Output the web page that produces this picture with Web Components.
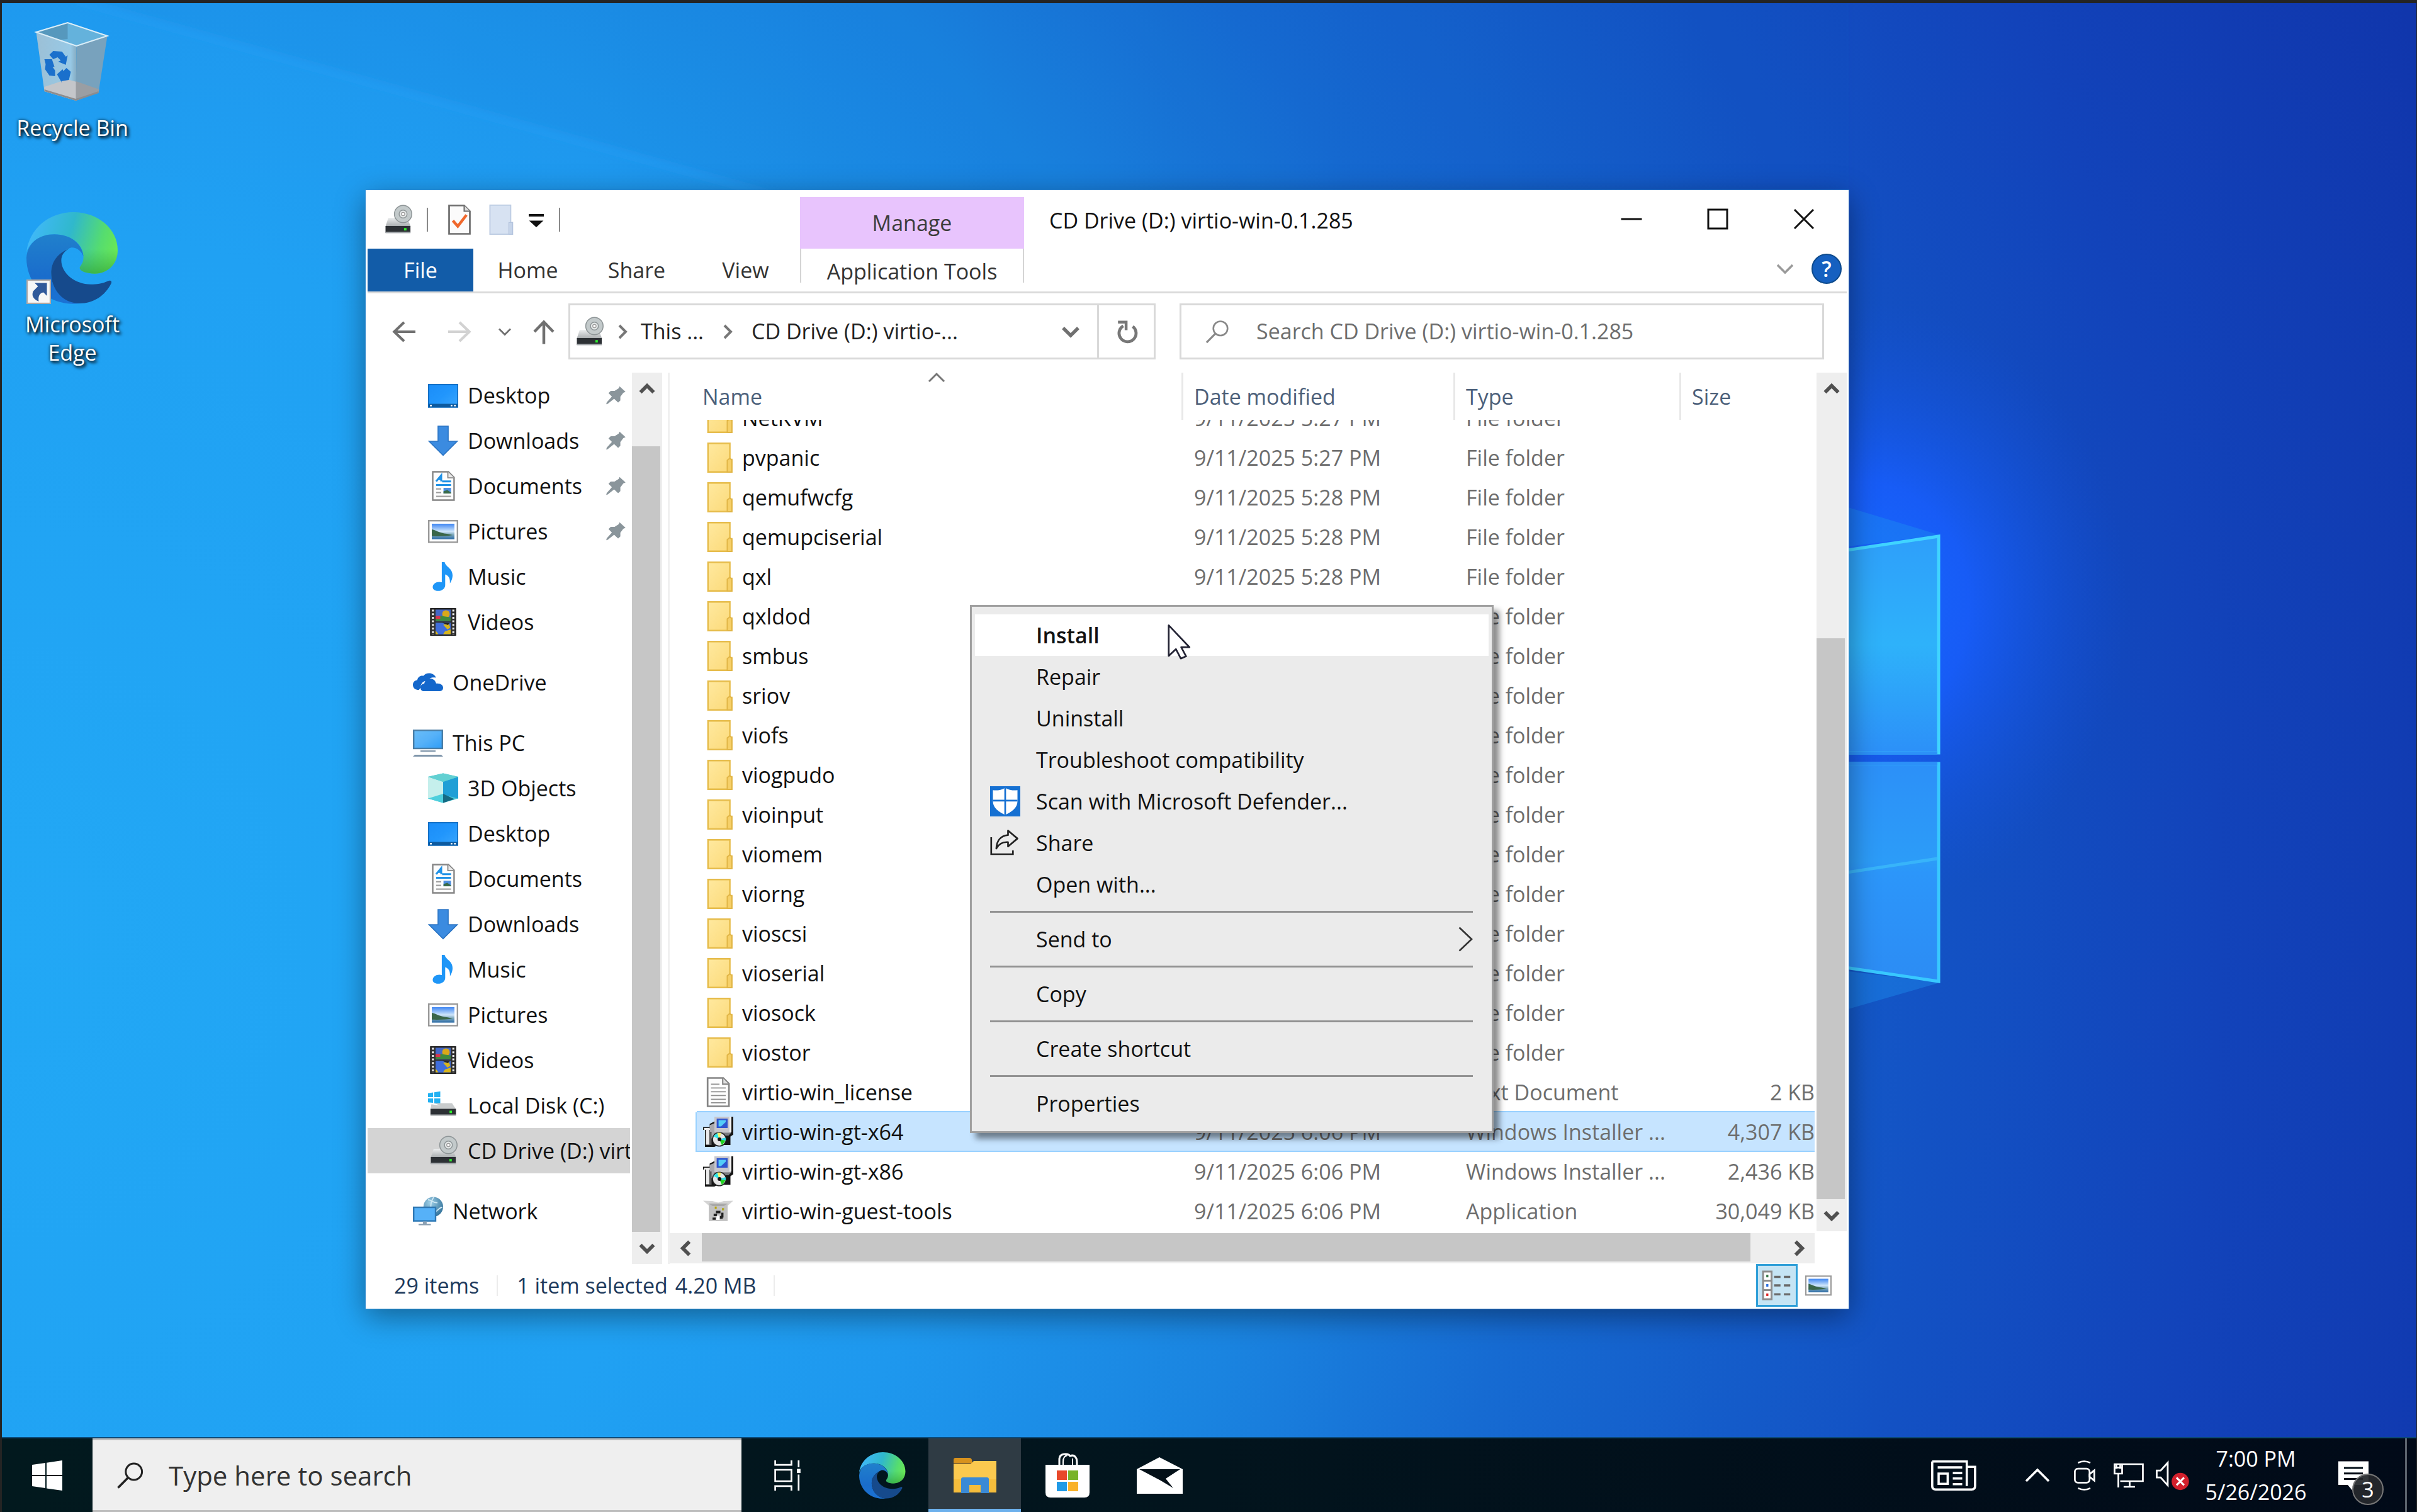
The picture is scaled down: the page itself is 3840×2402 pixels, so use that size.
<!DOCTYPE html>
<html lang="en">
<head>
<meta charset="utf-8">
<title>Desktop</title>
<style>
html,body{margin:0;height:100%}
body{font-family:"Open Sans","Noto Sans",sans-serif;font-size:34px;line-height:45px;color:#111;background:#242424;overflow:hidden}
</style>
</head>
<body>
<desktop-shell></desktop-shell>
<script>
const ICONS = {
drive:['0 0 16 16',`<defs><linearGradient id="a" x1="0" y1="0" x2="0" y2="1"><stop offset="0" stop-color="#eceeef"/><stop offset="1" stop-color="#a9adaf"/></linearGradient></defs><path d="M3 7h10l1.800 4.500H1.500z" fill="url(#a)"/><ellipse cx="10.800" cy="5" rx="4.600" ry="4.600" fill="#c3cacb" stroke="#8e9597" stroke-width=".5"/><circle cx="10.800" cy="5" r="2.100" fill="#e4e8e8" stroke="#8f9698" stroke-width=".5"/><circle cx="10.800" cy="5" r=".9" fill="#fff" stroke="#999" stroke-width=".4"/><path d="M1.500 11.300h13.200v3.600H1.500z" fill="#2c3034"/><path d="M1.500 14.400h13.200v.8H1.500z" fill="#a8acb0"/><rect x="11.300" y="12.400" width="1.300" height="1.300" fill="#2ef02e"/>`],
disk:['0 0 16 16',`<g fill="#22b1f2"><path d="M0 1.600l2.700-.4v2.500H0zM3.300 1.100L6.500.6v3.100H3.300zM0 4.300h2.700v2.400L0 6.400zM3.300 4.300h3.200v3.100l-3.200-.5z"/></g><path d="M3.200 6.800h9.500l2.100 3.200H1.300l.5-2.600 4.700.7z" fill="#c9cccd"/><path d="M1.300 9.800h13.500v3.400H1.300z" fill="#2c3034"/><path d="M1.300 12.800h13.500v.8H1.300z" fill="#b0b4b6"/><rect x="11.400" y="10.800" width="1.300" height="1.300" fill="#2ef02e"/>`],
check:['0 0 16 16',`<path d="M2.500.5h8l3 3v12h-11z" fill="#fbfbfb" stroke="#6d6d6d" stroke-width=".9"/><path d="M10.500.5v3h3" fill="#ddd" stroke="#6d6d6d" stroke-width=".7"/><path d="M4.500 8.500l2.600 3 4.600-6" fill="none" stroke="#f0682c" stroke-width="1.500"/>`],
newfolder:['0 0 16 16',`<path d="M1.800.3h11v9.200h1v6.200h-12z" fill="#d7e2f2" stroke="#bccbe2" stroke-width=".6"/><path d="M11.800 9.500h2v6.200h-2z" fill="#c6d4e9" stroke="#b4c4de" stroke-width=".4"/>`],
qat:['0 0 16 16',`<path d="M4 5h8v1.300H4zM4.200 8.500h7.600L8 12z" fill="#111"/>`],
min:['0 0 16 16',`<path d="M2.500 8h11" stroke="#111" stroke-width="1"/>`],
max:['0 0 16 16',`<rect x="3" y="3" width="10" height="10" fill="none" stroke="#111" stroke-width="1"/>`],
close:['0 0 16 16',`<path d="M3 3l10 10M13 3L3 13" stroke="#111" stroke-width="1"/>`],
down:['0 0 16 16',`<path d="M4 6l4 4 4-4" fill="none" stroke="currentColor" stroke-width="var(--sw,1.200)" style="stroke-width:var(--sw,1.2)"/>`],
up:['0 0 16 16',`<path d="M4 10l4-4 4 4" fill="none" stroke="currentColor" style="stroke-width:var(--sw,1.2)"/>`],
left:['0 0 16 16',`<path d="M10 4L6 8l4 4" fill="none" stroke="currentColor" style="stroke-width:var(--sw,1.2)"/>`],
right:['0 0 16 16',`<path d="M6 4l4 4-4 4" fill="none" stroke="currentColor" style="stroke-width:var(--sw,1.2)"/>`],
submenu:['0 0 16 16',`<path d="M4.500 1.800l6.500 6.200-6.500 6.200" fill="none" stroke="#333" stroke-width=".9"/>`],
back:['0 0 16 16',`<path d="M14 8H2.800M8 3L2.800 8l5.200 5" fill="none" stroke="currentColor" stroke-width="1.400"/>`],
fwd:['0 0 16 16',`<path d="M2 8h11.200M8 3l5.200 5L8 13" fill="none" stroke="currentColor" stroke-width="1.400"/>`],
upa:['0 0 16 16',`<path d="M8 14.500V3M3 8l5-5.200L13 8" fill="none" stroke="currentColor" stroke-width="1.500"/>`],
refresh:['0 0 16 16',`<path d="M11.200 5.200a4.500 4.500 0 1 1-5 -.3" fill="none" stroke="#777" stroke-width="1.600"/><path d="M3.400 2.900h4.300v4.300" fill="none" stroke="#777" stroke-width="1.500"/>`],
search:['0 0 16 16',`<circle cx="9.900" cy="6" r="4.300" fill="none" stroke="currentColor" stroke-width="1"/><path d="M6.800 9.200L1.500 14.500" stroke="currentColor" stroke-width="1.200"/>`],
desktop:['0 0 16 16',`<defs><linearGradient id="a" x1="0" y1="0" x2="1" y2="1"><stop offset="0" stop-color="#1b8df8"/><stop offset=".5" stop-color="#2196fc"/><stop offset="1" stop-color="#3aa6fd"/></linearGradient></defs><rect x=".3" y="2.300" width="15.400" height="12" fill="url(#a)" stroke="#1570c4" stroke-width=".6"/><path d="M.3 12.500h15.400v1.800H.3z" fill="#0d5a9f"/><path d="M1 13h1v.8H1zM12 13h.9v.8h-.9zM13.800 13h.9v.8h-.9z" fill="#fff"/>`],
download:['0 0 16 16',`<path d="M5.300.3h5.400v8h4.800L8 15.800.5 8.300h4.800z" fill="#3b8be0" stroke="#2b74c4" stroke-width=".5"/>`],
document:['0 0 16 16',`<path d="M2.500.5h8.300l3 3v12H2.500z" fill="#fdfdfd" stroke="#858585" stroke-width=".8"/><path d="M10.500.5v3.200h3.300" fill="#e8e8e8" stroke="#858585" stroke-width=".6"/><path d="M4.300 5.600L7 2.400V5.600M5 4.400h2.500M7.500 5.600h4.700M4.300 7.500h7.900" stroke="#2192e6" stroke-width="1" fill="none"/><path d="M4.300 9.600h2.700M4.300 11.500h2.700M4.300 13.500h7.900" stroke="#9a9a9a" stroke-width=".7"/><rect x="8.200" y="9" width="4" height="3" fill="#4f8fe0"/><path d="M8.200 10.800l2-.6 2 1.300v.5h-4z" fill="#386a4a"/>`],
picture:['0 0 16 16',`<defs><linearGradient id="a" x1="0" y1="0" x2="0" y2="1"><stop offset="0" stop-color="#3f86f2"/><stop offset=".5" stop-color="#cfe6fb"/><stop offset=".7" stop-color="#7fa9bd"/><stop offset="1" stop-color="#2c6ba6"/></linearGradient></defs><rect x=".4" y="2.400" width="15.200" height="11.400" fill="#fff" stroke="#9a9a9a" stroke-width=".8"/><rect x="2" y="4" width="12" height="8.200" fill="url(#a)"/><path d="M2 7c2 .3 4 2 8 2.300L13 10c-3 .6-7 .7-11 .6z" fill="#3a6649"/>`],
music:['0 0 16 16',`<path d="M7.300.3h1.500c.5 2.500 4.200 3.200 4.200 7 0 2-1 3.700-1.400 4.300.2-2.800-.6-4-2.500-4.800v5.700c0 1.900-1.700 3.100-3.800 3.100-1.700 0-2.800-.8-2.800-2.100 0-1.600 1.700-2.700 3.400-2.700.6 0 1 .1 1.400.2z" fill="#1f96f7"/>`],
video:['0 0 16 16',`<rect x="1.300" y=".9" width="13.400" height="14.200" fill="#303030" stroke="#111" stroke-width=".4"/><path d="M2.600 1.500v13.500M13.400 1.500v13.500" stroke="#eee" stroke-width="1" stroke-dasharray="1 .9"/><rect x="4" y="1.500" width="8" height="6.200" fill="#4468c8"/><rect x="4" y="8.400" width="8" height="6.200" fill="#3f6ddc"/><circle cx="9.500" cy="3.800" r="2" fill="#d9a819"/><path d="M4 5.300l3-.5 5 .8v1.900H4z" fill="#3e8a3c"/><path d="M4 4.800h2.500v1.600H4z" fill="#d8354e"/><path d="M8 9.500l3-.5.8 2-1.500 1zM9 13l3-1v2.500H8zM4 12.500l1.500 2H4z" fill="#d8b51d"/><path d="M7.500 8.400l4 .3-1 1z" fill="#222"/>`],
cloud:['0 0 16 16',`<path d="M3.200 12C1.300 12 0 11 0 9.300 0 7.800 1 6.900 2.300 6.800 2.700 5 4.100 4.300 5.500 4.600 6.400 3.500 7.700 3 9 3.200c1.500.2 2.700 1 3.200 2.300-2-.4-3.800.3-4.600 1.700-2.200 0-3.600 1.600-3.500 3.500z" fill="#1467cb"/><path d="M6 12.700c-1.300 0-2-.8-2-1.900 0-1.200.8-2 2-2.100.4-2 1.900-2.900 3.500-2.700 1.500.2 2.500 1.200 2.800 2.600 2.200-.3 3.700.8 3.700 2.200 0 1.200-.9 1.900-2.100 1.900z" fill="#1467cb"/>`],
pc:['0 0 16 16',`<defs><linearGradient id="a" x1="0" y1="0" x2="1" y2="1"><stop offset="0" stop-color="#69bdf8"/><stop offset=".5" stop-color="#56b1f8"/><stop offset="1" stop-color="#2f9df6"/></linearGradient></defs><rect x=".4" y="1.400" width="15.200" height="9.600" fill="url(#a)" stroke="#4a7ea6" stroke-width=".8"/><path d="M4 12h8v.9H4z" fill="#8ea2b4"/><path d="M1 14.300h14l1 1H0z" fill="#7e94aa"/>`],
cube:['0 0 16 16',`<path d="M8 .2L16 2v11.500L8 15.800 0 13.500V2z" fill="#47c8d6"/><path d="M0 2l8 2.700V13l-8 .5z" fill="#c5efec"/><path d="M8 4.700L16 2v11.500L8 11.500z" fill="#1f9fd6"/><path d="M8 .2L16 2 8 4.700 0 2z" fill="#62d0d2"/><path d="M0 13.500l8-2.500v4.800z" fill="#4ecfdd"/><path d="M8 11l6 2.800-6 2z" fill="#156a83"/>`],
network:['0 0 16 16',`<defs><radialGradient id="g" cx=".35" cy=".3" r=".8"><stop offset="0" stop-color="#9fd0e8"/><stop offset="1" stop-color="#2c6d96"/></radialGradient></defs><circle cx="10.800" cy="5.700" r="5.200" fill="url(#g)"/><path d="M8 2c2 0 3 2 5 1.500M11 9c2-1 3-3 4.500-3M11 .7c-2 3-2 6 0 9" stroke="#cfe8f4" stroke-width=".6" fill="none"/><rect x=".4" y="6" width="11.600" height="7.200" fill="#56b1f8" stroke="#2f78b4" stroke-width=".8"/><path d="M3 14.700h6.500v.8H3zM5.300 13.500h2v1.300h-2z" fill="#8ea2b4"/>`],
folder:['0 0 16 16',`<defs><linearGradient id="a" x1="0" y1="0" x2="1" y2="1"><stop offset="0" stop-color="#ffe99f"/><stop offset="1" stop-color="#fbd978"/></linearGradient></defs><path d="M2.600.4h11.600v8.600h1v6.600H2.600z" fill="url(#a)" stroke="#e6bc4b" stroke-width=".8"/><path d="M12.800 9.400l1.300-1 1.100.8v6.400h-2.400z" fill="#f6d069" stroke="#e0b445" stroke-width=".6"/>`],
text:['0 0 16 16',`<path d="M2.400.5h8.300l3 3v12H2.400z" fill="#fdfdfd" stroke="#858585" stroke-width=".9"/><path d="M10.400.5v3.300h3.300" fill="#e0e0e0" stroke="#858585" stroke-width=".7"/><path d="M4.200 3.800h4.500M4.200 5.800h7.800M4.200 7.800h7.800M4.200 9.800h7.800M4.200 11.800h7.800M4.200 13.600h7.800" stroke="#8f8f8f" stroke-width=".6"/>`],
msi:['0 0 16 16',`<path d="M14.700 0H16v9.500l-1.500 1V15H8L6 16H1l0-9H0V5.500h3.500V3.800L6 2.500z" fill="#161616"/><path d="M6 0h8.800v8.600H6z" fill="#c6c6cc"/><rect x="7.200" y="1" width="5.800" height="5" fill="#2f55cf"/><path d="M8.200 1.800h3.800v1L9.500 5.200H8.200z" fill="#53cdf8"/><path d="M14 0h1v8h-1z" fill="#f4f4f4"/><path d="M3.500 4.500L6 3.500v8H3.500z" fill="#a8a8ac"/><path d="M.5 6h3l.2 1H.5zM1.500 7h1.800v7.800H1.500z" fill="#ededed"/><path d="M3.300 8h1.200v7H3.300z" fill="#5a5a5a"/><path d="M6 8.600h8.800L13.500 10H6z" fill="#7a7a80"/><circle cx="8.600" cy="12" r="3.600" fill="#e6e6e6" stroke="#222" stroke-width=".5"/><path d="M8.600 12L5.400 10.300 7.500 8.700z" fill="#2ee6e6"/><path d="M8.600 12l1-3.400-2-.1z" fill="#f4f06a"/><path d="M8.600 12l3.400.6-2 2.600z" fill="#21d621"/><path d="M8.600 12l3.300-1 .1 1.600z" fill="#27d9e6"/><circle cx="8.700" cy="12" r="1" fill="#111"/>`],
exe:['0 0 16 16',`<path d="M0 2.500l5 .2 3 .8 3-.8 5-.2-2.800 2.500H3z" fill="#d4d4d4"/><path d="M3 4h10v9.300H3z" fill="#c2c2c2"/><path d="M3 4h10l-2 1.300H5z" fill="#a8a8a8"/><rect x="6.200" y="5.600" width="1" height="1.200" fill="#b8a400"/><rect x="10" y="6.400" width="1.100" height="1.200" fill="#b0a821"/><path d="M6.800 7.800h2.400v1.400H6.800zM5.600 9.300h1.800v1.400H5.600zM5 11.400h1.700v1.200H5zM9.600 8.800h1.200v2.600H9.600zM8.800 10.600h1.600v1.400H8.800z" fill="#222"/><path d="M7.300 10.400h1.500v2.300H6.900z" fill="#fff"/>`],
pin:['1 1.5 14 14',`<path d="M10.500 2.200l4 3.800-1.500.6-2 2.600v2.600l-1.500 1.400-2.700-2.600L2.500 14l-1 .3.300-1.200 3.500-4-2.300-2.300L4.500 5.300h2.600l2.700-1.700z" fill="#8a959b"/>`],
details:['0 0 16 16',`<path d="M1.500 1.500h4v13h-4zM1.500 5.800h4M1.500 10.200h4" fill="#fff" stroke="#8d8d8d" stroke-width=".9"/><rect x="3" y="3" width="1" height="1.200" fill="#3a7a4a"/><rect x="3" y="7.400" width="1" height="1.200" fill="#2a6fe0"/><rect x="3" y="11.800" width="1" height="1.200" fill="#d22"/><path d="M6.700 4h3M11.300 4h3M6.700 8h3M11.300 8h3M6.700 12.200h3M11.300 12.200h3" stroke="#6a6a6a" stroke-width="1"/>`],
shield:['0 0 16 16',`<rect width="16" height="16" fill="#1570d2"/><path d="M8 .8c2 1.300 4.300 1.500 6.500 1.300V8c0 3.600-3.200 5.600-6.500 7.200C4.700 13.600 1.500 11.600 1.500 8V2.100C3.700 2.300 6 2.100 8 .8z" fill="#fff"/><path d="M8 .8v14.400M1.500 7.600h13" stroke="#1570d2" stroke-width=".9"/>`],
share:['0 0 16 16',`<path d="M.6 5v9h11.500v-2" fill="none" stroke="#222" stroke-width=".9"/><path d="M9.500 1.500l5 4.200-5 4.200V7.600C6.500 7.400 4.600 8.500 3.300 11 3.500 6.800 5.700 4.200 9.500 3.900z" fill="none" stroke="#222" stroke-width=".9" stroke-linejoin="round"/>`],
winlogo:['0 0 48 48',`<path d="M0 7l21-3v19H0zM23 3.700L48 0v23H23zM0 25h21v19L0 41zM23 25h25v23l-25-3.600z" fill="#fff"/>`],
taskview:['0 0 16 16',`<g fill="none" stroke="#fff" stroke-width=".9"><path d="M1.200 0v2.400h8.600V0M1.200 16v-2.400h8.600V16M1.200 5h8.600v6H1.200zM13.600 0v3.600M13.600 7.500V16"/></g><rect x="12.700" y="4.500" width="1.900" height="2.200" fill="#fff"/>`],
explorer:['0 0 68 56',`<path d="M0 3q0-3 3-3h22q3 0 4 3l1 6H0z" fill="#d8921d"/><path d="M0 10h27l5-5h36v50H0z" fill="#fbc94f"/><path d="M0 34h68v21H0z" fill="#f5bd3c"/><path d="M12 56V34q0-3 3-3h38q3 0 3 3v22H43V43H25v13z" fill="#3a8ad6"/>`],
store:['0 0 70 70',`<path d="M22 18V10q0-9 9-9h2q4 0 6 3 7-3 10 4 1 2 1 10" fill="none" stroke="#fff" stroke-width="3"/><path d="M28 18v-5q0-9 7-10M43 18V8" fill="none" stroke="#fff" stroke-width="2"/><path d="M0 18h70v44q0 8-8 8H8q-8 0-8-8z" fill="#fff"/><path d="M18 27h16v15H18z" fill="#e8492a"/><path d="M36 27h16v15H36z" fill="#78b32a"/><path d="M18 45h16v15H18z" fill="#1f9ae6"/><path d="M36 45h16v15H36z" fill="#f9b22a"/>`],
mail:['0 0 73 58',`<path d="M0 19L36 0l37 19v39H0z" fill="#fff"/><path d="M4 19h65L46 34l12 15-20-12z" fill="#041018"/>`],
news:['0 0 24 16',`<g fill="none" stroke="#fff"><path d="M.6.6h18.300v13M18.900 3.400h4.400v10.200q0 1.800-1.800 1.800H2.400Q.6 15.400.6 13.600V.6" stroke-width="1.200"/><path d="M3.500 3.700h13" stroke-width="1.200"/><path d="M4 7h4.800v5.400H4z" stroke-width="1.200"/><path d="M11.500 6.700h5M11.500 9.600h5M11.500 12.600h5" stroke-width="1.200"/></g>`],
camera:['0 0 12 16',`<g fill="none" stroke="#fff" stroke-width=".9"><path d="M2.500 1.300q3.300-1.600 6.500 0M2.500 14.700q3.300 1.600 6.500 0"/><rect x=".8" y="4.400" width="7.800" height="7.400" rx="1.600"/><path d="M8.600 7.300l2.500-2v5.400l-2.500-2z"/></g>`],
ethernet:['0 0 16 13',`<g fill="none" stroke="#fff" stroke-width=".9"><path d="M4.500.5h11v9h-12M5.300 12.500h6M8.500 9.500v3M.5.500h4v5h-4zM2.500 5.500v7.300M.5 2.500h1.500M3 2.500h1.500M1.500.5v1.800h2V.5"/></g>`],
mute:['0 0 18 16',`<path d="M.5 5.500h2l3.600-4v11.500l-3.600-4h-2z" fill="none" stroke="#fff" stroke-width=".9"/><circle cx="12.500" cy="11" r="4.400" fill="#d3202c"/><path d="M10.600 9.100l3.800 3.800M14.400 9.100l-3.800 3.800" stroke="#fff" stroke-width="1"/>`],
chat:['0 0 16 16',`<path d="M0 .5h16V13H9l-1.500 3L5 13H0z" fill="#fff"/><path d="M3 4h10M3 6.900h10M3 9.800h10" stroke="#020e18" stroke-width="1"/>`],
edge:['0 0 145 145',`<defs><linearGradient id="g" x1="0" y1=".4" x2="1" y2=".6"><stop offset="0" stop-color="#41b8fb"/><stop offset=".45" stop-color="#30b8cc"/><stop offset=".8" stop-color="#55dc70"/><stop offset="1" stop-color="#6ae855"/></linearGradient><linearGradient id="s" x1="0" y1="0" x2="0" y2="1"><stop offset=".6" stop-color="#2a9a50" stop-opacity="0"/><stop offset="1" stop-color="#2a9a30" stop-opacity=".6"/></linearGradient><linearGradient id="b" x1="0" y1="0" x2="0" y2="1"><stop offset="0" stop-color="#2080cc"/><stop offset=".6" stop-color="#1a6dcc"/><stop offset="1" stop-color="#1b72d4"/></linearGradient></defs><path d="M0 64C4 26 36 0 74 0c38 0 70 26 70 60 0 22-16 37-36 37-14 0-24-4-24-9 0-3 6-6 6-17C90 50 70 35 44 35 22 35 4 48 0 64z" fill="url(#g)"/><path d="M0 64C4 26 36 0 74 0c38 0 70 26 70 60 0 22-16 37-36 37-14 0-24-4-24-9 0-3 6-6 6-17C90 50 70 35 44 35 22 35 4 48 0 64z" fill="url(#s)"/><path d="M0 72c2-24 20-37 44-37 26 0 44 15 46 35-4-10-12-15-20-14-18 6-31 22-31 40 0 24 17 46 45 48-8 1-18 1-26-1C24 136 0 108 0 72z" fill="url(#b)"/><path d="M68 57C50 64 39 78 39 96c0 26 19 48 45 48 22 0 40-12 50-32 1-4-2-5-6-3-8 4-18 5-26 5-26 0-47-18-47-38 0-8 5-15 13-19z" fill="#164a8c"/>`],
bin:['0 0 115 127',`<defs><linearGradient id="l" x1="0" y1="0" x2="1" y2="0"><stop offset="0" stop-color="#9cc0d6"/><stop offset=".85" stop-color="#97c9e6"/><stop offset="1" stop-color="#86acc2"/></linearGradient></defs><path d="M0 16L50 1l63 21-49 16z" fill="#64b2dc"/><path d="M0 16L50 1v26l-20 2z" fill="#5698bd"/><path d="M0 16l64 22-1 87-50-15z" fill="url(#l)"/><path d="M64 38l49-16-14 90-36 13z" fill="#78a2bd"/><path d="M13 103l36-12 15 4v30l-51-15z" fill="#c4c6ca"/><path d="M63 94l37 13-1 5-36 13z" fill="#9a9ea3"/><path d="M13 107l50 15 36-12v3l-36 12-50-15z" fill="#8c8c8e"/><path d="M0 16L50 1l63 21-49 16z" fill="none" stroke="#dbeef8" stroke-width="2"/><g fill="#1a70cc"><path d="M21 52l6-6 14 1 6 8 3-2-3 15-12-5 4-2-5-5-7 3z"/><path d="M13 59l12 0 4 12-3 0 4 6 0 9-9-1-7-10 1-8z"/><path d="M33 83l9-8 1 3 5-5 7 6-3 13-12 2 1 3z"/></g>`],
shortcut:['0 0 36 36',`<rect x="1" y="1" width="34" height="34" fill="#f7f7f7" stroke="#b0a8a4" stroke-width="2"/><path d="M12 5h18v19l-5-5c-6 1-8 6-7 13-8-3-11-9-8-15l7-7z" fill="#30599a"/>`],
pointer:['0 0 12 19',`<path d="M.6.8v16.200l3.800-3.600 2.600 5 2.800-1.200-2.600-4.800h4.400z" fill="#fff" stroke="#223" stroke-width=".9" stroke-linejoin="round"/>`],
help:['0 0 48 48',`<circle cx="24" cy="24" r="23" fill="#1560c0" stroke="#0d4a8c" stroke-width="2"/>`]
};
const BASE = `:host{display:block;box-sizing:border-box}*{box-sizing:border-box}button,input{font:inherit;color:inherit;border:0;background:none;margin:0;padding:0;outline:0;text-align:inherit}a{color:inherit;text-decoration:none}`;
function define(name, css, html, setup){
  const t = document.createElement('template');
  t.innerHTML = `<style>${BASE}${css}</style>${html}`;
  customElements.define(name, class extends HTMLElement{
    connectedCallback(){
      if(this.shadowRoot) return;
      this.attachShadow({mode:'open'}).append(t.content.cloneNode(true));
      if(setup) setup.call(this, this.shadowRoot);
    }
  });
}

define('win-icon', `:host{flex:none;width:48px;height:48px}svg{display:block;width:100%;height:100%;overflow:visible}`, ``, function(r){
  const [vb, body] = ICONS[this.getAttribute('name')];
  r.innerHTML += `<svg viewBox="${vb}" aria-hidden="true">${body}</svg>`;
});

define('desktop-wallpaper', `svg{display:block;width:100%;height:100%}`, `
<svg viewBox="3 5 3836 2278" preserveAspectRatio="none" aria-hidden="true">
<defs>
<radialGradient id="bg" gradientUnits="userSpaceOnUse" cx="0" cy="1500" r="4100"><stop offset="0" stop-color="#22a8f5"/><stop offset=".28" stop-color="#20a1f3"/><stop offset=".38" stop-color="#1e98ee"/><stop offset=".5" stop-color="#1a84e0"/><stop offset=".6" stop-color="#166bd2"/><stop offset=".75" stop-color="#1352c4"/><stop offset=".86" stop-color="#1243ba"/><stop offset="1" stop-color="#1036ac"/></radialGradient>
<radialGradient id="glow" gradientUnits="userSpaceOnUse" cx="2960" cy="960" r="420" gradientTransform="translate(2960 960) scale(1 1.150) translate(-2960 -960)"><stop offset="0" stop-color="#186aff"/><stop offset=".4" stop-color="#185eff" stop-opacity=".85"/><stop offset="1" stop-color="#1450d8" stop-opacity="0"/></radialGradient>
<linearGradient id="p1" x1="0" y1="0" x2="0" y2="1"><stop offset="0" stop-color="#2e9ffa"/><stop offset=".5" stop-color="#2eb2fa"/><stop offset="1" stop-color="#2c90f8"/></linearGradient>
<linearGradient id="p2" x1="0" y1="0" x2="0" y2="1"><stop offset="0" stop-color="#2c90f8"/><stop offset=".45" stop-color="#2c9cf8"/><stop offset=".5" stop-color="#2c96fa"/><stop offset="1" stop-color="#2c8cf4"/></linearGradient>
<filter id="f" x="-10%" y="-10%" width="120%" height="120%"><feGaussianBlur stdDeviation="5"/></filter>
</defs>
<rect width="3840" height="2402" fill="url(#bg)"/>
<ellipse cx="2960" cy="960" rx="420" ry="480" fill="url(#glow)"/>
<g filter="url(#f)"><path d="M120 0L1200 302 2000 560" stroke="#2aa4ff" stroke-opacity=".3" stroke-width="10" fill="none"/><path d="M120 0L1200 302 2937 800V0z" fill="#0c4ca8" fill-opacity=".06"/></g>
<path d="M2600 705l482 145-482 60zM2600 1700l482-139-482-60z" fill="#1f90f0" fill-opacity=".4"/>
<path d="M2400 955L3080 852v344H2400z" fill="url(#p1)" stroke="#40d4ff" stroke-width="5"/>
<path d="M2400 1213h680v346L2400 1458z" fill="url(#p2)" stroke="#38c8ff" stroke-width="5"/>
<path d="M2700 1422L3078 1364" stroke="#38b4fa" stroke-width="5"/>
<path d="M2400 1196H3078M2400 1213H3078" stroke="#2c90f8" stroke-width="5"/>
</svg>`);

define('desk-shortcut', `:host{width:188px}a{display:flex;flex-direction:column;align-items:center;text-align:center;color:#fff;text-shadow:3px 3px 5px #000,0 0 5px rgba(0,0,0,.8)}
.pic{position:relative;display:flex;align-items:center;height:146px;margin-bottom:10px}::slotted(win-icon[slot=badge]){position:absolute;left:0;bottom:0;width:39px;height:39px}`,
`<a href="#"><span class="pic"><slot name="icon"></slot><slot name="badge"></slot></span><span><slot></slot></span></a>`);

define('scroll-bar', `
:host{display:flex;flex-direction:column;flex:none;width:48px;background:#eee;color:#505050;--sw:2.2}
:host([horizontal]){flex-direction:row;width:auto;height:48px}
button{flex:none;height:51px;display:grid;place-items:center}win-icon{width:42px;height:42px}
:host([horizontal]) button{height:auto;width:51px}
.a{flex:var(--before,0) 0 0}.t{flex:var(--thumb,1) 0 0;background:#c6c6c6;margin-right:3px}.c{flex:var(--after,0) 0 0}
:host([horizontal]) .t{margin:0 0 3px}`,
`<button id="p" aria-label="Scroll back"></button><span class="a"></span><span class="t"></span><span class="c"></span><button id="n" aria-label="Scroll forward"></button>`,
function(r){const h=this.hasAttribute('horizontal');
 r.getElementById('p').innerHTML=`<win-icon name="${h?'left':'up'}"></win-icon>`;
 r.getElementById('n').innerHTML=`<win-icon name="${h?'right':'down'}"></win-icon>`;});

define('title-bar', `:host{display:flex;height:90px}
.qat{display:flex;align-items:center;flex:none;width:687px;padding:0 0 3px 24px}
.qat i{width:2px;height:38px;background:#8a8a8a;margin:0 26px 0 22px}
.qat button+button{margin-left:19px}.qat button.d{margin-left:7px}.qat i:last-child{margin:0 0 0 12px}
.manage{flex:none;width:356px;margin-top:8px;background:#e8c4fd;color:#3c3c3c;display:grid;place-items:center}
h1{font:inherit;margin:0;padding-left:40px;flex:1;align-self:center}
.ctl{display:flex;padding-bottom:4px}.ctl button{width:137px;display:grid;place-items:center}`,
`<div class="qat"><win-icon name="drive"></win-icon><i></i><button aria-label="Properties"><win-icon name="check"></win-icon></button><button aria-label="New folder"><win-icon name="newfolder"></win-icon></button><button class="d" aria-label="Customize"><win-icon name="qat"></win-icon></button><i></i></div>
<div class="manage">Manage</div><h1>CD Drive (D:) virtio-win-0.1.285</h1>
<div class="ctl"><button aria-label="Minimize"><win-icon name="min"></win-icon></button><button aria-label="Maximize"><win-icon name="max"></win-icon></button><button aria-label="Close"><win-icon name="close"></win-icon></button></div>`);

define('ribbon-tabs', `:host{display:flex;height:71px;border-bottom:3px solid #dadada;color:#333}
nav{display:flex;flex:none;width:687px}nav button{flex:1;text-align:center}nav .file{flex:none;width:168px;background:#125ca8;color:#fff}
.ctx{width:356px;text-align:center;border:solid #d4d4d4;border-width:0 2px;margin-bottom:14px;padding-top:14px}
.end{margin-left:auto;display:flex;align-items:center;padding:0 8px 4px 0;gap:18px;color:#999}
.end win-icon{display:block}.help{display:grid;place-items:center;color:#fff;font-weight:600}.help *{grid-area:1/1}.help span{z-index:1}`,
`<nav><button class="file">File</button><button>Home</button><button>Share</button><button>View</button></nav><button class="ctx">Application Tools</button>
<div class="end"><button aria-label="Expand the ribbon"><win-icon name="down"></win-icon></button><button class="help"><win-icon name="help"></win-icon><span>?</span></button></div>`);

define('address-row', `:host{display:flex;padding:16px 36px 21px 14px;color:#222}
button{display:grid;place-items:center;flex:none}
.n{width:88px;color:#707070}.n.off{color:#d2d2d2}.n.c{width:56px}.n.u{width:68px;margin-right:5px}.n.c win-icon{width:36px}
.box{display:flex;align-items:center;height:89px;border:3px solid #d9d9d9}
.addr{flex:1;padding-left:6px;--sw:1.6}.k{width:58px;color:#777}.k.w{width:76px}.k win-icon{width:40px;height:40px}
.end{margin-left:auto}.v{width:56px;color:#707070;margin-right:14px;--sw:1.8}
.r{width:90px;height:100%;border-left:3px solid #d9d9d9}
.find{width:1024px;margin-left:38px;padding-left:36px;color:#888;gap:41px}.find win-icon{width:42px;height:42px}
.find input{flex:1;color:#6d6d6d}.find input::placeholder{color:#6d6d6d;opacity:1}`,
`<button class="n" aria-label="Back"><win-icon name="back"></win-icon></button><button class="n off" aria-label="Forward"><win-icon name="fwd"></win-icon></button><button class="n c" aria-label="Recent"><win-icon name="down"></win-icon></button><button class="n u" aria-label="Up"><win-icon name="upa"></win-icon></button>
<div class="box addr"><win-icon name="drive"></win-icon><button class="k" aria-label="Folders"><win-icon name="right"></win-icon></button><a href="#">This ...</a><button class="k w" aria-label="Folders"><win-icon name="right"></win-icon></button><a href="#">CD Drive (D:) virtio-...</a><button class="end v" aria-label="Previous locations"><win-icon name="down"></win-icon></button><button class="r" aria-label="Refresh"><win-icon name="refresh"></win-icon></button></div>
<label class="box find"><win-icon name="search"></win-icon><input aria-label="Search" placeholder="Search CD Drive (D:) virtio-win-0.1.285"></label>`);

define('nav-item', `a{display:flex;align-items:center;height:72px;padding-left:96px;padding-right:9px;overflow:hidden;white-space:nowrap}
:host([root]) a{padding-left:72px}:host([current]) a{background:#d4d4d4;padding-right:0}
span{margin-left:15px;flex:1;min-width:0;overflow:hidden}#p{width:33px;height:33px}:host([current]){margin-right:3px}`,
`<a href="#"></a>`, function(r){
 r.querySelector('a').innerHTML=`<win-icon name="${this.getAttribute('icon')}"></win-icon><span><slot></slot></span>`+(this.hasAttribute('pinned')?'<win-icon id="p" name="pin"></win-icon>':'');
});

define('nav-tree', `:host{display:flex;flex:none;width:480px;border-right:3px solid #f0f0f0}nav{flex:1;min-width:0;overflow:hidden}scroll-bar{--before:66;--thumb:1248;margin-right:9px}.g{margin-bottom:24px}.g:last-child{margin:0}`,
`<nav aria-label="Folders"><div class="g"><nav-item icon="desktop" pinned>Desktop</nav-item><nav-item icon="download" pinned>Downloads</nav-item><nav-item icon="document" pinned>Documents</nav-item><nav-item icon="picture" pinned>Pictures</nav-item><nav-item icon="music">Music</nav-item><nav-item icon="video">Videos</nav-item></div>
<div class="g"><nav-item root icon="cloud">OneDrive</nav-item></div>
<div class="g"><nav-item root icon="pc">This PC</nav-item><nav-item icon="cube">3D Objects</nav-item><nav-item icon="desktop">Desktop</nav-item><nav-item icon="document">Documents</nav-item><nav-item icon="download">Downloads</nav-item><nav-item icon="music">Music</nav-item><nav-item icon="picture">Pictures</nav-item><nav-item icon="video">Videos</nav-item><nav-item icon="disk">Local Disk (C:)</nav-item><nav-item icon="drive" current>CD Drive (D:) virtio-win-0.1.285</nav-item></div>
<div class="g"><nav-item root icon="network">Network</nav-item></div></nav><scroll-bar></scroll-bar>`);

const F='File folder', D='9/11/2025 ';
const FILES=[['folder','NetKVM','5:27',F],['folder','pvpanic','5:27',F],['folder','qemufwcfg','5:28',F],['folder','qemupciserial','5:28',F],['folder','qxl','5:28',F],
...['qxldod','smbus','sriov','viofs','viogpudo','vioinput','viomem','viorng','vioscsi','vioserial','viosock','viostor'].map(n=>['folder',n,'5:28',F]),
['text','virtio-win_license','6:06','Text Document','2 KB'],['msi','virtio-win-gt-x64','6:06','Windows Installer ...','4,307 KB'],['msi','virtio-win-gt-x86','6:06','Windows Installer ...','2,436 KB'],['exe','virtio-win-guest-tools','6:06','Application','30,049 KB']];

define('file-list', `:host{flex:1;min-width:0;display:grid;grid-template-columns:1fr 48px;column-gap:3px;grid-template-rows:1364px 48px;row-gap:3px}
.view{overflow:hidden;padding-left:43px}
table{width:100%;table-layout:fixed;border-collapse:separate;border-spacing:0;color:#6d6d6d}
th{position:sticky;top:0;background:#fff;font-weight:400;text-align:left;height:75px;padding:2px 0 0 17px;color:#4c607a;border-left:3px solid #e8e8e8;vertical-align:middle;z-index:1}
th:first-child{border:0;padding-left:9px}th win-icon{position:absolute;left:357px;top:-16px;color:#777;--sw:1}
td{height:63px;padding:0 0 1px 20px;white-space:nowrap}td:first-child{padding-left:10px;color:#111}td:last-child{text-align:right;padding:0}
.n{display:flex;align-items:center;gap:14px}
.sel td{background:#c6e4ff;box-shadow:0 -2px #99d1ff,inset 0 -2px #99d1ff}.sel td:first-child{box-shadow:0 -2px #99d1ff,inset 0 -2px #99d1ff,-2px 0 #99d1ff}
.v{--before:371;--thumb:891}.h{--thumb:1666;--after:51}`,
`<div class="view"><table><colgroup><col><col style="width:432px"><col style="width:359px"><col style="width:215px"></colgroup><thead><tr><th>Name<win-icon name="up"></win-icon></th><th>Date modified</th><th>Type</th><th>Size</th></tr></thead><tbody></tbody></table></div><scroll-bar class="v"></scroll-bar><scroll-bar class="h" horizontal></scroll-bar>`,
function(r){
 r.querySelector('tbody').innerHTML=FILES.map(f=>`<tr${f[1].endsWith('x64')?' class="sel"':''}><td><div class="n"><win-icon name="${f[0]}"></win-icon>${f[1]}</div></td><td>${D}${f[2]} PM</td><td>${f[3]}</td><td>${f[4]||''}</td></tr>`).join('');
 r.querySelector('.view').scrollTop=34;
});

define('status-bar', `:host{display:flex;align-items:center;height:68px;padding:0 24px 0 42px;color:#1e3a5c}
i{width:2px;height:33px;background:#ececec;margin:0 30px 0 28px}.s{margin-right:12px}
.b{margin-left:auto;display:flex;align-items:center;gap:12px}.b button{display:grid;place-items:center}.on{width:66px;height:68px;background:#c5e4f4;border:3px solid #2f9fd8}.b button:last-child win-icon{width:42px}.on win-icon{width:54px;height:54px}`,
`<span>29 items</span><i></i><span class="s">1 item selected</span><span>4.20 MB</span><i></i><div class="b"><button class="on" aria-label="Details"><win-icon name="details"></win-icon></button><button aria-label="Thumbnails"><win-icon name="picture"></win-icon></button></div>`);

define('explorer-window', `:host{padding:3px;background:#fff;box-shadow:0 0 0 1px rgba(60,140,210,.6),0 12px 44px rgba(0,0,0,.4)}main{display:flex;height:1416px}`,
`<title-bar></title-bar><ribbon-tabs></ribbon-tabs><address-row></address-row><main><nav-tree></nav-tree><file-list></file-list></main><status-bar></status-bar>`);

define('menu-item', `button{display:flex;align-items:center;width:100%;height:66px;padding:0 12px 0 24px}
:host([active]) button{background:#fff}:host([bold]){font-weight:600}
.ic{width:48px;height:48px;margin-right:25px;flex:none}.m{margin-left:auto}`,
`<button role="menuitem"><span class="ic"></span><slot></slot></button>`, function(r){
 const i=this.getAttribute('icon'); if(i) r.querySelector('.ic').innerHTML=`<win-icon name="${i}"></win-icon>`;
 if(this.hasAttribute('submenu')) r.querySelector('button').insertAdjacentHTML('beforeend','<win-icon class="m" name="submenu"></win-icon>');
});

define('context-menu', `:host{background:#ebebeb;border:3px solid #a0a0a0;padding:12px 5px 11px;box-shadow:9px 9px 9px rgba(0,0,0,.45)}
hr{border:0;height:3px;background:#929292;margin:9px 25px 9px 24px}`,
`<div role="menu"><menu-item bold active>Install</menu-item><menu-item>Repair</menu-item><menu-item>Uninstall</menu-item><menu-item>Troubleshoot compatibility</menu-item><menu-item icon="shield">Scan with Microsoft Defender...</menu-item><menu-item icon="share">Share</menu-item><menu-item>Open with...</menu-item><hr><menu-item submenu>Send to</menu-item><hr><menu-item>Copy</menu-item><hr><menu-item>Create shortcut</menu-item><hr><menu-item>Properties</menu-item></div>`);

define('task-bar', `:host{display:flex;height:119px;background:linear-gradient(90deg,#02191e,#02141d 50%,#010a18);color:#fff;border-top:2px solid #0c4a78}
button{display:grid;place-items:center;width:147px;height:100%;flex:none}
.start{width:144px}.find{display:flex;align-items:center;width:1031px;background:#efefef;border:solid #bdbdbd;border-width:3px 0;padding-left:36px;gap:37px;color:#222;font-size:42px}
.find input{flex:1;height:60px;color:#333}.find input::placeholder{color:#333;opacity:1}
.tv{margin-right:3px}.on{background:#2f3b44;border-bottom:5px solid #6cb0ec}
.edge{width:74px;height:74px}.ex{width:68px;height:56px;margin-top:6px}.st{width:70px;height:70px}.ml{width:73px;height:58px}
.tray{display:flex;margin-left:auto}.nw{width:186px}.nw win-icon{width:74px}.up{width:80px;--sw:.8}.up win-icon{width:72px;height:72px}.t{width:70px}.t .cam{width:36px}.t .eth{height:40px}.sp{width:72px}.sp win-icon{width:58px;height:50px}
.clock{width:190px;text-align:center;line-height:53px;align-content:center}.note{width:142px;position:relative;justify-content:start;padding-left:36px}
.badge{position:absolute;left:58px;top:56px;width:50px;height:50px;border-radius:50%;background:#26292dee;border:2px solid #777;display:grid;place-items:center;line-height:40px}
.show{width:18px;border-left:3px solid #5a636c}`,
`<button class="start" aria-label="Start"><win-icon name="winlogo"></win-icon></button><label class="find"><win-icon name="search"></win-icon><input aria-label="Search" placeholder="Type here to search"></label>
<button class="tv" aria-label="Task view"><win-icon name="taskview"></win-icon></button><button aria-label="Edge"><win-icon class="edge" name="edge"></win-icon></button><button class="on" aria-label="File Explorer"><win-icon class="ex" name="explorer"></win-icon></button><button aria-label="Store"><win-icon class="st" name="store"></win-icon></button><button aria-label="Mail"><win-icon class="ml" name="mail"></win-icon></button>
<div class="tray"><button class="nw" aria-label="News"><win-icon name="news"></win-icon></button><button class="up" aria-label="Hidden icons"><win-icon name="up"></win-icon></button><button class="t" aria-label="Camera"><win-icon class="cam" name="camera"></win-icon></button><button class="t" aria-label="Network"><win-icon class="eth" name="ethernet"></win-icon></button><button class="sp" aria-label="Volume"><win-icon name="mute"></win-icon></button>
<button class="clock"><span>7:00 PM<br>5/26/2026</span></button><button class="note"><win-icon name="chat"></win-icon><span class="badge">3</span></button><button class="show" aria-label="Show desktop"></button></div>`);

define('desktop-shell', `:host{display:flex;flex-direction:column;height:100vh;border:solid #242424;border-width:5px 1px 0 3px;position:relative}
.desk{flex:1;position:relative;min-height:0}
desktop-wallpaper{position:absolute;inset:0}
.icons{position:relative;display:flex;flex-direction:column;width:220px;padding:20px 0 0 18px;gap:111px}
win-icon[slot=icon]{width:146px;height:146px}win-icon.bin[slot=icon]{width:116px;height:127px}
explorer-window{position:absolute;left:578px;top:297px;width:2356px}
context-menu{position:absolute;left:1538px;top:956px;width:832px}
.ptr{position:absolute;left:1852px;top:986px;width:36px;height:57px}`,
`<div class="desk"><desktop-wallpaper></desktop-wallpaper>
<div class="icons"><desk-shortcut>Recycle Bin<win-icon class="bin" slot="icon" name="bin"></win-icon></desk-shortcut><desk-shortcut>Microsoft Edge<win-icon slot="icon" name="edge"></win-icon><win-icon slot="badge" name="shortcut"></win-icon></desk-shortcut></div>
<explorer-window></explorer-window><context-menu></context-menu><win-icon class="ptr" name="pointer"></win-icon></div><task-bar></task-bar>`);
</script>
</body>
</html>
